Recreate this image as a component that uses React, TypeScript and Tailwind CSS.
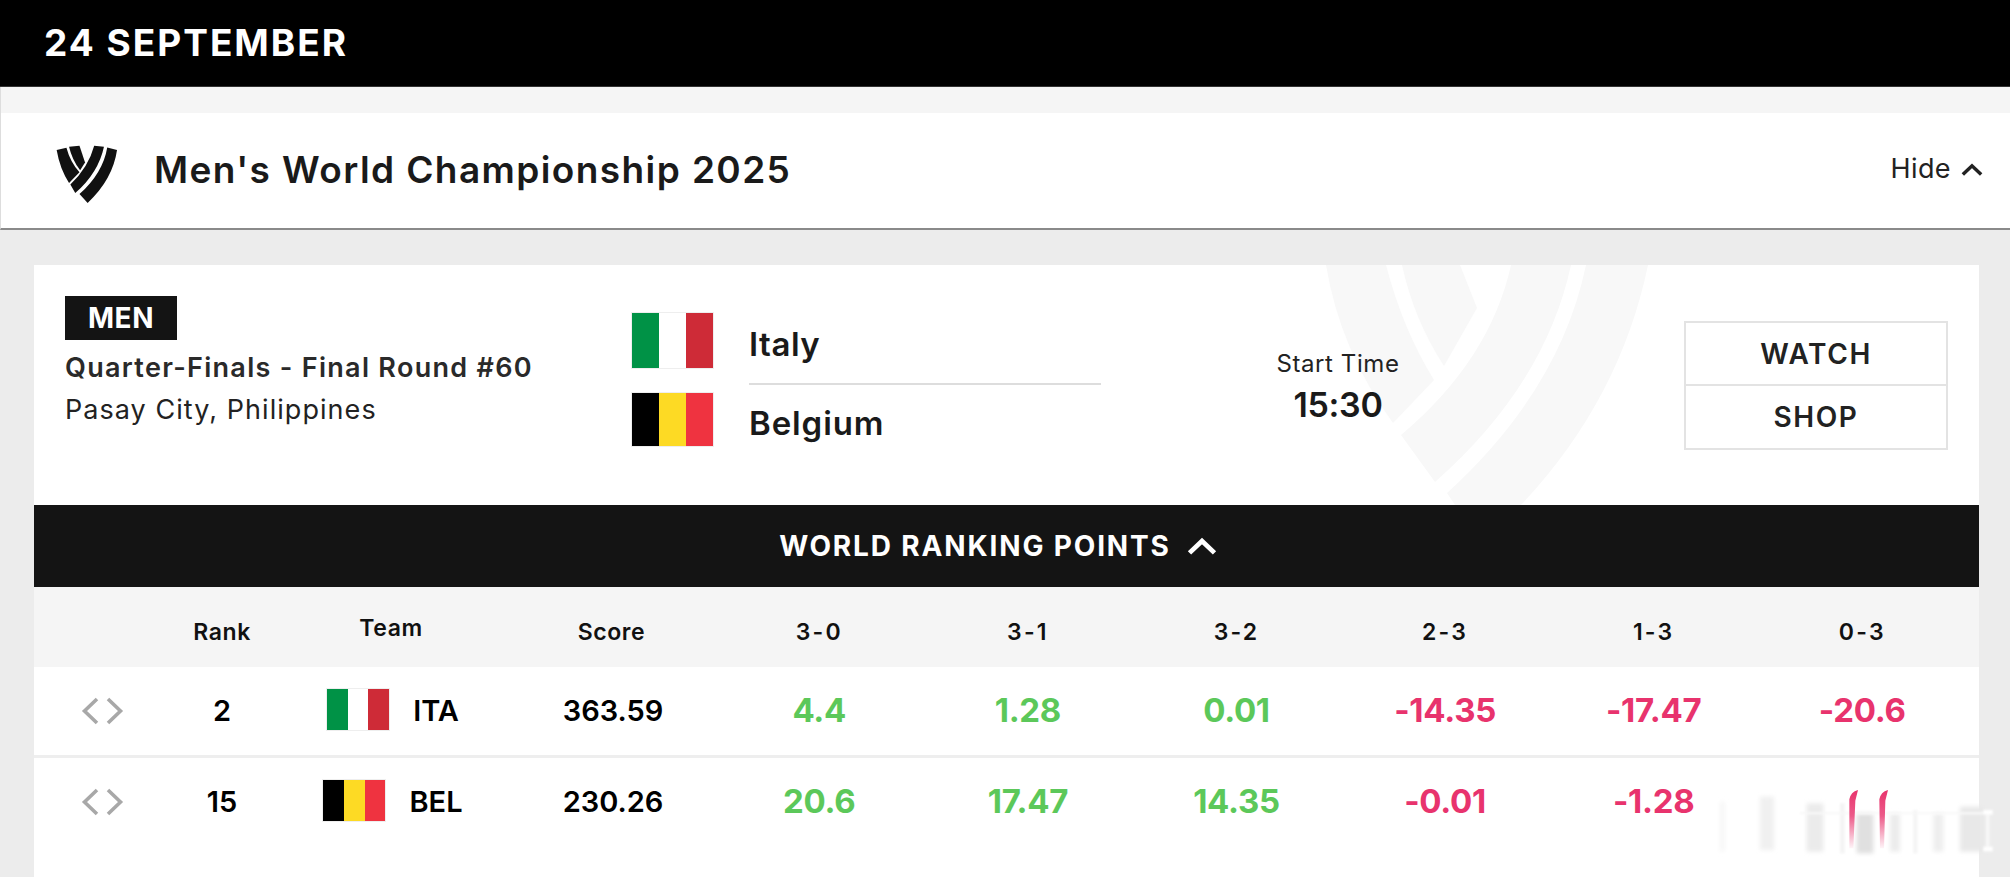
const font = { fontFamily: 'Inter, "Liberation Sans", sans-serif' };

function LogoMark({ className, fill }: { className: string; fill: string }) {
  return (
    <svg viewBox="78 45 190 180" className={className} fill={fill}>
      <path d="M80 60 L110 53 Q122 98 150 128 L118 161 Q90 118 80 60 Z" />
      <path d="M118 50 L150 47 L167 98 L152 122 Q128 92 118 50 Z" />
      <path d="M195 47 L225 50 Q208 130 137 192 L122 166 Q178 112 195 47 Z" />
      <path d="M235 52 L265 60 Q252 150 175 222 L150 195 Q222 130 235 52 Z" />
    </svg>
  );
}

function Watermark() {
  return (
    <svg viewBox="1300 265 400 240" className="absolute left-[1266px] top-0 h-[240px] w-[400px]" fill="#f8f8f8">
      <path d="M1326 265 L1386 265 Q1403 330 1434 380 L1393 423 Q1340 350 1326 265 Z" />
      <path d="M1402 265 L1460 265 L1477 308 L1444 366 Q1414 320 1402 265 Z" />
      <path d="M1511 265 L1571 265 Q1545 385 1435 482 L1401 435 Q1490 360 1511 265 Z" />
      <path d="M1586 265 L1648 265 Q1620 400 1521 505 L1455 505 L1447 493 Q1560 390 1586 265 Z" />
    </svg>
  );
}

function Flag({ colors, className }: { colors: string[]; className: string }) {
  return (
    <div className={`flex shrink-0 outline-1 outline-[#eeeeee] ${className}`}>
      {colors.map((c) => (
        <div key={c} className="flex-1" style={{ backgroundColor: c }} />
      ))}
    </div>
  );
}

const italy = ['#009246', '#ffffff', '#ce2b37'];
const belgium = ['#000000', '#fdda24', '#ef3340'];

const rows = [
  { rank: '2', flag: italy, code: 'ITA', score: '363.59', pts: ['4.4', '1.28', '0.01', '-14.35', '-17.47', '-20.6'] },
  { rank: '15', flag: belgium, code: 'BEL', score: '230.26', pts: ['20.6', '17.47', '14.35', '-0.01', '-1.28', ''] },
];

const gridCols = 'grid grid-cols-[136px_104px_234px_207px_repeat(6,208.6px)] items-center';

function Chevron({ className }: { className: string }) {
  return (
    <svg viewBox="0 0 24 14" className={className} fill="none" stroke="currentColor" strokeWidth="3.8">
      <path d="M2 12.5 L12 3 L22 12.5" />
    </svg>
  );
}

// smudge left over from a removed watermark, bottom right of the table
function Smudge() {
  return (
    <svg viewBox="0 0 930 321" className="pointer-events-none absolute left-[1700px] top-[770px] h-[107px] w-[310px]">
      <defs>
        <filter id="soft" x="-10%" y="-30%" width="120%" height="160%"><feGaussianBlur stdDeviation="7" /></filter>
        <filter id="softer" x="-10%" y="-30%" width="120%" height="160%"><feGaussianBlur stdDeviation="2.5" /></filter>
        <linearGradient id="fade" x1="0" y1="0" x2="0" y2="1">
          <stop offset="0" stopColor="#e8336d" />
          <stop offset="0.45" stopColor="#e8336d" stopOpacity="0.8" />
          <stop offset="1" stopColor="#e8336d" stopOpacity="0.05" />
        </linearGradient>
      </defs>
      <g filter="url(#soft)">
        <rect x="60" y="95" width="14" height="150" fill="#f6f6f6" />
        <rect x="180" y="80" width="42" height="160" fill="#f0f0f0" />
        <rect x="320" y="100" width="50" height="145" fill="#ebebeb" />
        <rect x="470" y="130" width="50" height="120" fill="#e0e0e0" />
        <rect x="570" y="130" width="30" height="115" fill="#ececec" />
        <rect x="700" y="130" width="30" height="115" fill="#eeeeee" />
        <rect x="780" y="110" width="70" height="135" fill="#e8e8e8" />
      </g>
      <g filter="url(#softer)">
        <rect x="420" y="100" width="14" height="150" fill="#f4f4f4" />
        <rect x="640" y="120" width="12" height="130" fill="#f4f4f4" />
        <rect x="300" y="126" width="550" height="7" fill="#f8f8f8" />
        <rect x="850" y="120" width="28" height="14" fill="#ffffff" />
        <rect x="850" y="230" width="28" height="14" fill="#ffffff" />
        <rect x="858" y="134" width="10" height="96" fill="#f8f8f8" />
      </g>
      <path d="M448 88 Q452 66 474 60 L466 92 L460 235 L448 235 Z" fill="url(#fade)" />
      <path d="M538 88 Q542 66 564 60 L556 92 L552 235 L540 235 Z" fill="url(#fade)" />
    </svg>
  );
}

export default function App() {
  return (
    <div className="relative h-[877px] overflow-hidden bg-[#ececec]" style={font}>
      <div className="flex h-[87px] items-center border-b border-[#333333] bg-black pl-[44px]">
        <span className="text-[37px] font-bold tracking-[2px] text-white">24 SEPTEMBER</span>
      </div>
      <div className="h-[26px] border-l border-[#dddddd] bg-[#f5f5f5]" />

      <div className="flex h-[117px] items-center justify-between border-b-2 border-l border-b-[#8a8a8a] border-l-[#dddddd] bg-white pl-[55px] pr-[27px]">
        <div className="flex items-center gap-[36px]">
          <LogoMark className="mt-[7px] h-[59px] w-[62px]" fill="#111111" />
          <h1 className="-mt-[2px] text-[37px] font-semibold tracking-[1.4px] text-[#1a1a1a]">Men's World Championship 2025</h1>
        </div>
        <div className="-mt-[2px] flex items-center gap-[10px] text-[#222222]">
          <span className="text-[27px] tracking-[0.4px]">Hide</span>
          <Chevron className="h-[13px] w-[22px]" />
        </div>
      </div>

      <div className="mx-[34px] mt-[35px] h-[700px] w-[1945px] bg-white">
        <div className="relative flex h-[240px] overflow-hidden pl-[31px]">
          <Watermark />
          <div className="relative w-[567px] pt-[31px]">
            <div className="flex h-[44px] w-[112px] items-center justify-center bg-[#141414] text-[28px] font-bold tracking-[0.5px] text-white">
              MEN
            </div>
            <p className="mt-[12px] text-[27px] leading-[32px] font-semibold tracking-[1.3px] text-[#2a2a2a]">Quarter-Finals - Final Round #60</p>
            <p className="mt-[10px] text-[27px] leading-[32px] tracking-[1.05px] text-[#222222]">Pasay City, Philippines</p>
          </div>
          <div className="relative w-[469px] pt-[48px]">
            <div className="flex h-[72px] gap-[36px]">
              <Flag colors={italy} className="h-[55px] w-[81px]" />
              <div className="flex flex-1 items-center border-b-2 border-[#dddddd] pb-[6px] text-[33px] font-semibold tracking-[0.5px] text-[#1a1a1a]">Italy</div>
            </div>
            <div className="mt-[8px] flex gap-[36px]">
              <Flag colors={belgium} className="h-[53px] w-[81px]" />
              <div className="flex flex-1 items-center pt-[6px] text-[33px] font-semibold tracking-[0.9px] text-[#1a1a1a]">Belgium</div>
            </div>
          </div>
          <div className="relative flex w-[474px] flex-col items-center pt-[83px]">
            <span className="text-[24px] leading-[32px] tracking-[0.6px] text-[#222222]">Start Time</span>
            <span className="mt-[4px] text-[34px] leading-[42px] font-semibold tracking-[-0.3px] text-[#1a1a1a]">15:30</span>
          </div>
          <div className="relative ml-[109px] mt-[56px] h-[129px] w-[264px] border-2 border-[#e3e3e3] bg-white text-[28px] font-semibold tracking-[1.6px] text-[#222222]">
            <div className="flex h-[63px] items-center justify-center border-b-2 border-[#e3e3e3]">WATCH</div>
            <div className="flex h-[62px] items-center justify-center">SHOP</div>
          </div>
        </div>

        <div className="flex h-[82px] items-center justify-center gap-[16px] bg-[#141414] pr-[17px] text-white">
          <span className="text-[28px] font-bold tracking-[1.85px]">WORLD RANKING POINTS</span>
          <Chevron className="h-[18px] w-[30px]" />
        </div>

        <div className={`${gridCols} h-[80px] bg-[#f5f5f5] pt-[10px] text-center text-[23px] font-semibold tracking-[0.6px] text-[#111111]`}>
          <div />
          <div>Rank</div>
          <div className="-mt-[8px]">Team</div>
          <div>Score</div>
          {['3-0', '3-1', '3-2', '2-3', '1-3', '0-3'].map((h) => (
            <div key={h} className="tracking-[2.2px]">{h}</div>
          ))}
        </div>

        {rows.map((row, i) => (
          <div key={row.code} className={`${gridCols} text-center ${i === 0 ? 'h-[91px] border-b-[3px] border-[#eeeeee]' : 'h-[88px]'}`}>
            <div className="flex items-center justify-center gap-[7px] text-[#a8a8a8]">
              <svg viewBox="0 0 18 28" className="h-[28px] w-[18px]" fill="none" stroke="currentColor" strokeWidth="3.6"><path d="M16 2 L3.5 14 L16 26" /></svg>
              <svg viewBox="0 0 18 28" className="h-[28px] w-[18px]" fill="none" stroke="currentColor" strokeWidth="3.6"><path d="M2 2 L14.5 14 L2 26" /></svg>
            </div>
            <div className="text-[29px] font-semibold text-black">{row.rank}</div>
            <div className="flex items-center justify-center gap-[24px] pl-[4px]">
              <Flag colors={row.flag} className="-mt-[3px] h-[41px] w-[62px]" />
              <span className="text-[29px] font-semibold text-black">{row.code}</span>
            </div>
            <div className="pl-[3px] text-[29px] font-semibold text-black">{row.score}</div>
            {row.pts.map((p, j) => (
              <div key={j} className={`text-[33px] font-bold tracking-[-0.3px] ${j < 3 ? 'text-[#5cc85a]' : 'text-[#e8336d]'}`}>
                {p}
              </div>
            ))}
          </div>
        ))}
      </div>
      <Smudge />
    </div>
  );
}
